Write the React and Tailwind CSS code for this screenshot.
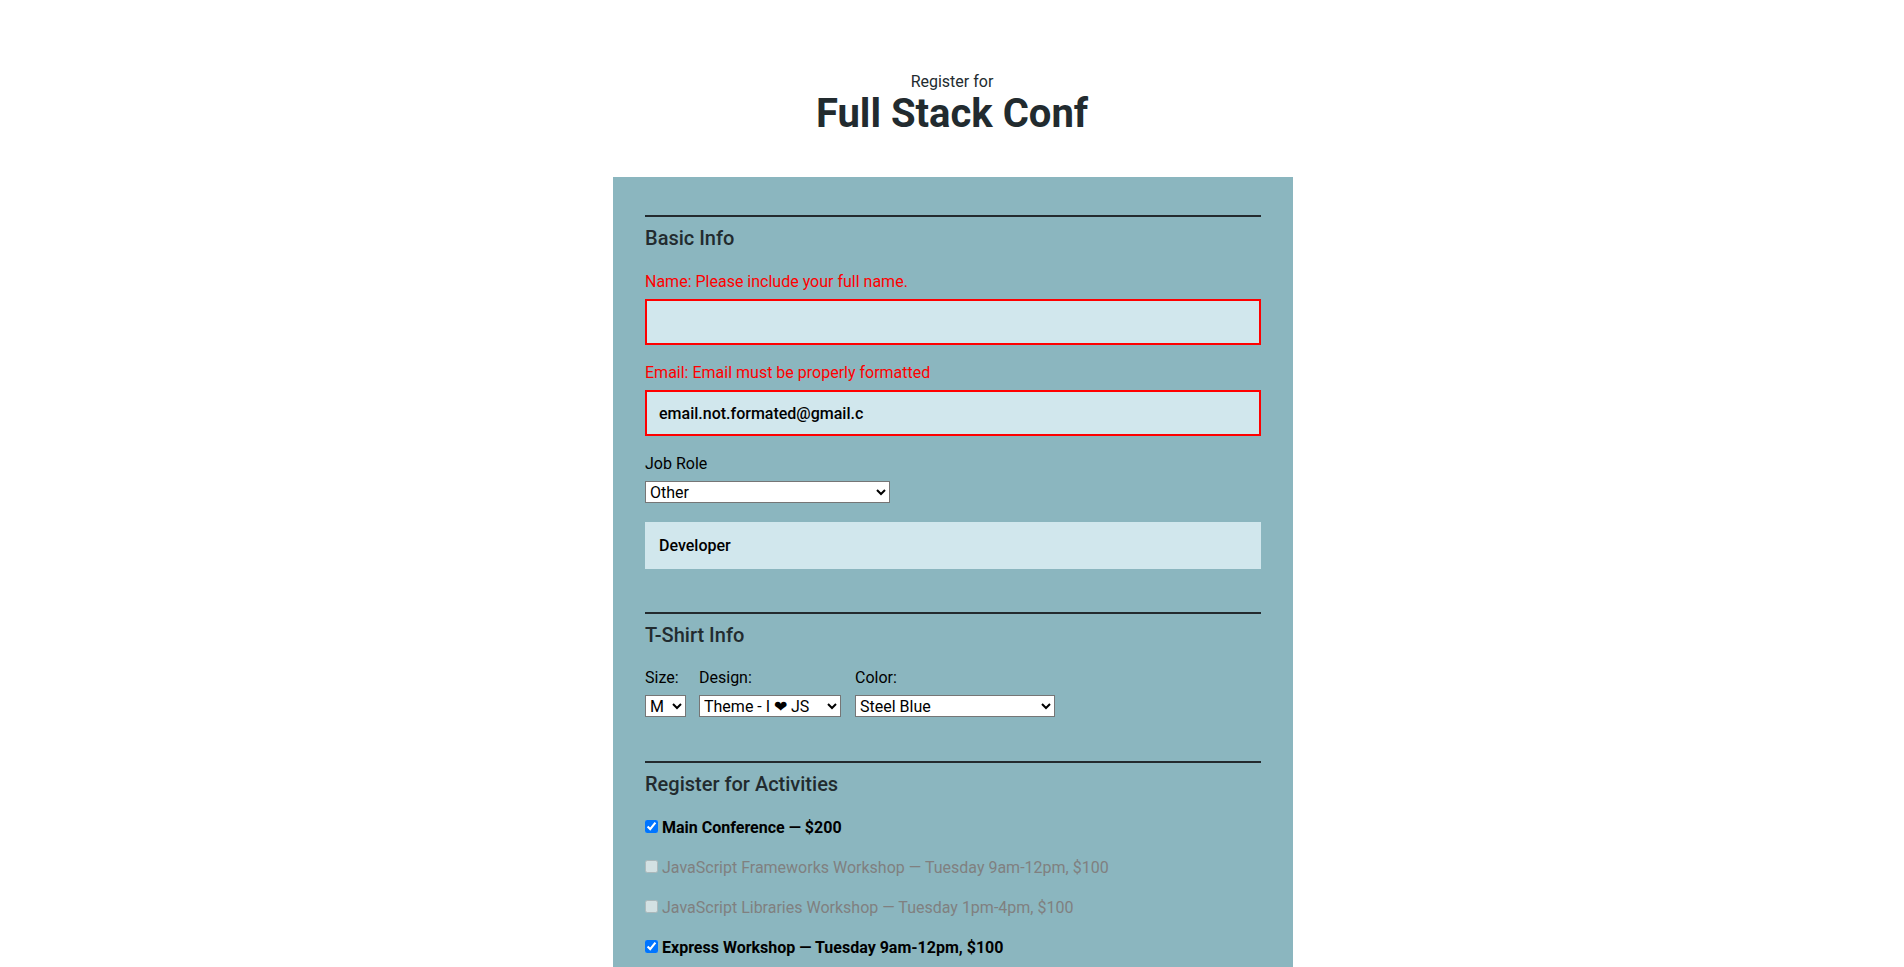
export default function App() {
    const activities = [
        { label: "Main Conference — $200", checked: true, disabled: false },
        { label: "JavaScript Frameworks Workshop — Tuesday 9am-12pm, $100", checked: false, disabled: true },
        { label: "JavaScript Libraries Workshop — Tuesday 1pm-4pm, $100", checked: false, disabled: true },
        { label: "Express Workshop — Tuesday 9am-12pm, $100", checked: true, disabled: false },
        { label: "Node.js Workshop — Tuesday 1pm-4pm, $100", checked: false, disabled: false },
        { label: "Build tools Workshop — Wednesday 9am-12pm, $100", checked: false, disabled: false },
        { label: "npm Workshop — Wednesday 1pm-4pm, $100", checked: false, disabled: false },
    ];

    return (
        <div className="min-h-screen bg-white font-['Roboto','Liberation_Sans',sans-serif] text-[#222b2f]">
            <header className="pt-[72px] text-center">
                <p className="text-base leading-5">Register for</p>
                <h1 className="text-[40px] font-bold leading-[44px]">Full Stack Conf</h1>
            </header>

            <div className="mt-[41px] flex justify-center pl-[2px]">
                <form className="w-[680px] bg-[#8bb6bf] px-8 pt-[38px] pb-16">
                    <fieldset className="border-t-2 border-[#232a2e]">
                        <h2 className="mt-[9px] text-[20px] font-medium leading-6">Basic Info</h2>

                        <label className="mt-5 block text-base leading-6 text-[#ff0000]">
                            Name: Please include your full name.
                        </label>
                        <input
                            type="text"
                            className="mt-[5px] block h-[46px] w-full border-2 border-[#ff0000] bg-[#d1e7ed] px-3 text-base font-medium text-black"
                        />

                        <label className="mt-4 block text-base leading-6 text-[#ff0000]">
                            Email: Email must be properly formatted
                        </label>
                        <input
                            type="text"
                            defaultValue="email.not.formated@gmail.c"
                            className="mt-[5px] block h-[46px] w-full border-2 border-[#ff0000] bg-[#d1e7ed] px-3 text-base font-medium text-black"
                        />

                        <label className="mt-4 block text-base leading-6 text-black">Job Role</label>
                        <select
                            defaultValue="other"
                            className="mt-[5px] block h-[22px] w-[245px] border border-[#767676] bg-white text-base text-black"
                        >
                            <option value="full-stack">Full Stack JavaScript Developer</option>
                            <option value="front-end">Front End Developer</option>
                            <option value="back-end">Back End Developer</option>
                            <option value="designer">Designer</option>
                            <option value="student">Student</option>
                            <option value="other">Other</option>
                        </select>
                        <input
                            type="text"
                            defaultValue="Developer"
                            className="mt-[19px] block h-[47px] w-full bg-[#d1e7ed] px-[14px] text-base font-medium text-black"
                        />
                    </fieldset>

                    <fieldset className="mt-[43px] border-t-2 border-[#232a2e]">
                        <h2 className="mt-[9px] text-[20px] font-medium leading-6">T-Shirt Info</h2>
                        <div className="mt-[19px] flex items-start text-black">
                            <div className="mr-[13px] flex flex-col">
                                <label className="text-base leading-6">Size:</label>
                                <select defaultValue="m" className="mt-[5px] h-[22px] w-[41px] border border-[#767676] bg-white text-base">
                                    <option value="s">S</option>
                                    <option value="m">M</option>
                                    <option value="l">L</option>
                                    <option value="xl">XL</option>
                                </select>
                            </div>
                            <div className="mr-[14px] flex flex-col">
                                <label className="text-base leading-6">Design:</label>
                                <select defaultValue="heart" className="mt-[5px] h-[22px] w-[142px] border border-[#767676] bg-white text-base">
                                    <option value="select">Select Theme</option>
                                    <option value="puns">Theme - JS Puns</option>
                                    <option value="heart">Theme - I ❤ JS</option>
                                </select>
                            </div>
                            <div className="flex flex-col">
                                <label className="text-base leading-6">Color:</label>
                                <select defaultValue="steelblue" className="mt-[5px] h-[22px] w-[200px] border border-[#767676] bg-white text-base">
                                    <option value="tomato">Tomato</option>
                                    <option value="steelblue">Steel Blue</option>
                                    <option value="dimgrey">Dim Grey</option>
                                </select>
                            </div>
                        </div>
                    </fieldset>

                    <fieldset className="mt-[44px] border-t-2 border-[#232a2e]">
                        <h2 className="mt-[9px] text-[20px] font-medium leading-6">Register for Activities</h2>
                        <div className="mt-5 flex flex-col gap-4">
                            {activities.map((a) => (
                                <label
                                    key={a.label}
                                    className={
                                        a.disabled
                                            ? "block text-base leading-6 text-[#808080]"
                                            : "block text-base font-bold leading-6 text-black"
                                    }
                                >
                                    <input
                                        type="checkbox"
                                        defaultChecked={a.checked}
                                        disabled={a.disabled}
                                        className="mr-1 h-[13px] w-[13px]"
                                    />
                                    {a.label}
                                </label>
                            ))}
                        </div>
                    </fieldset>
                </form>
            </div>
        </div>
    );
}
